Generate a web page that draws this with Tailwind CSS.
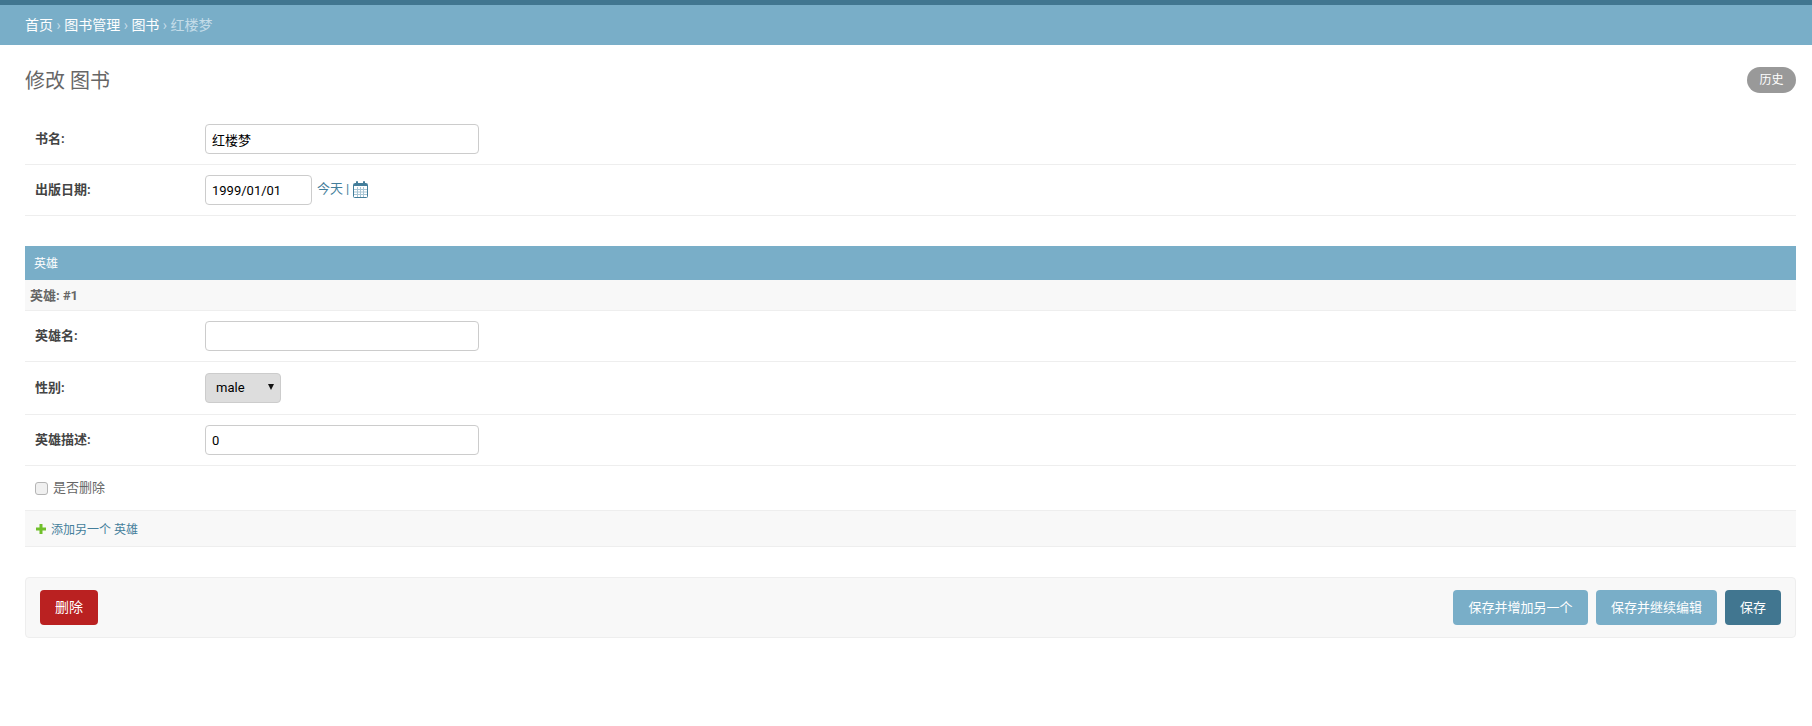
<!DOCTYPE html>
<html lang="zh-CN">
<head>
  <meta charset="UTF-8" />
  <title>修改 图书</title>
  <script src="https://cdn.jsdelivr.net/npm/@tailwindcss/browser@4"></script>
</head>
<body class="bg-white font-['Roboto','Noto_Sans_CJK_SC',sans-serif] text-[13px] text-[#333]">
  <!-- Breadcrumbs -->
  <nav class="h-[45px] border-t-[5px] border-[#417690] bg-[#79aec8] pl-[25px] text-[14px] leading-[40px] text-white">
    <a href="#">首页</a>
    <span class="text-[#c4dce8]">›</span>
    <a href="#">图书管理</a>
    <span class="text-[#c4dce8]">›</span>
    <a href="#">图书</a>
    <span class="text-[#c4dce8]">›</span>
    <span class="text-[#c4dce8]">红楼梦</span>
  </nav>

  <main class="pl-[25px] pr-[16px]">
    <!-- Title + history -->
    <div class="flex h-[69px] items-start justify-between">
      <h1 class="mt-[22px] text-[20px] leading-[28px] font-normal text-[#666]">修改 图书</h1>
      <a href="#" class="mt-[22px] flex h-[26px] w-[49px] items-center justify-center rounded-full bg-[#999] text-[12px] text-white">历史</a>
    </div>

    <!-- Book fields -->
    <div class="flex h-[51px] items-center border-b border-[#eee] pl-[10px]">
      <label class="w-[170px] font-bold text-[#444]">书名:</label>
      <input type="text" value="红楼梦" class="h-[30px] w-[274px] rounded-[4px] border border-[#ccc] px-[6px] text-black" />
    </div>
    <div class="flex h-[51px] items-center border-b border-[#eee] pl-[10px]">
      <label class="w-[170px] font-bold text-[#444]">出版日期:</label>
      <input type="text" value="1999/01/01" class="h-[30px] w-[107px] rounded-[4px] border border-[#ccc] px-[6px] text-black" />
      <a href="#" class="-mt-[3px] ml-[5px] text-[#447e9b]">今天</a>
      <span class="-mt-[3px] ml-[3px] text-[#447e9b]">|</span>
      <svg class="-mt-[2px] ml-[4px]" width="15" height="17" viewBox="0 0 15 17" fill="none">
        <rect x="0.5" y="2.5" width="14" height="14" rx="1" fill="#fff" stroke="#447e9b" />
        <rect x="1" y="3" width="13" height="2" fill="#447e9b" />
        <rect x="3" y="0" width="2" height="4" rx="1" fill="#447e9b" />
        <rect x="10" y="0" width="2" height="4" rx="1" fill="#447e9b" />
        <path d="M1 8.5h13M1 11h13M1 13.5h13M4.5 6v10M7.5 6v10M10.5 6v10" stroke="#a9c6d5" />
      </svg>
    </div>

    <!-- Inline group -->
    <section class="mt-[30px]">
      <h2 class="h-[34px] bg-[#79aec8] pl-[9px] text-[12px] leading-[36px] text-white">英雄</h2>
      <h3 class="h-[31px] border-b border-[#eee] bg-[#f8f8f8] pl-[5px] leading-[32px] font-bold text-[#666]">英雄: #1</h3>
      <div class="flex h-[51px] items-center border-b border-[#eee] pl-[10px]">
        <label class="w-[170px] font-bold text-[#444]">英雄名:</label>
        <input type="text" class="h-[30px] w-[274px] rounded-[4px] border border-[#ccc] px-[6px] text-black" />
      </div>
      <div class="flex h-[53px] items-center border-b border-[#eee] pl-[10px]">
        <label class="w-[170px] font-bold text-[#444]">性别:</label>
        <div class="relative -mt-[1px]">
          <select class="block h-[30px] w-[76px] appearance-none rounded-[4px] border border-[#ccc] bg-[#ddd] pl-[10px] text-black">
            <option>male</option>
          </select>
          <svg class="absolute top-[11px] left-[63px]" width="6" height="6" viewBox="0 0 6 6"><path d="M0 0h6L3 6z" fill="#111" /></svg>
        </div>
      </div>
      <div class="flex h-[51px] items-center border-b border-[#eee] pl-[10px]">
        <label class="w-[170px] font-bold text-[#444]">英雄描述:</label>
        <input type="text" value="0" class="h-[30px] w-[274px] rounded-[4px] border border-[#ccc] px-[6px] text-black" />
      </div>
      <div class="flex h-[44px] items-center pl-[10px]">
        <input type="checkbox" class="h-[13px] w-[13px] appearance-none rounded-[3px] border border-[#b5b5b5] bg-[#f0f0f0]" />
        <label class="ml-[5px] text-[#666]">是否删除</label>
      </div>
      <div class="flex h-[37px] items-center border-y border-[#eee] bg-[#f8f8f8] pl-[11px] text-[12px] text-[#447e9b]">
        <svg width="10" height="10" viewBox="0 0 10 10"><path d="M3.5 0h3v3.5H10v3H6.5V10h-3V6.5H0v-3h3.5z" fill="#70bf2b" /></svg>
        <a href="#" class="ml-[5px] mt-[2px]">添加另一个 英雄</a>
      </div>
    </section>

    <!-- Submit row -->
    <div class="mt-[30px] flex h-[61px] items-center justify-between rounded-[4px] border border-[#eee] bg-[#f8f8f8] px-[14px]">
      <a href="#" class="flex h-[35px] w-[58px] items-center justify-center rounded-[4px] bg-[#ba2121] text-[14px] text-white">删除</a>
      <div class="flex gap-[8px] text-white">
        <button class="h-[35px] w-[135px] rounded-[4px] bg-[#79aec8]">保存并增加另一个</button>
        <button class="h-[35px] w-[121px] rounded-[4px] bg-[#79aec8]">保存并继续编辑</button>
        <button class="h-[35px] w-[56px] rounded-[4px] bg-[#417690]">保存</button>
      </div>
    </div>
  </main>
</body>
</html>
